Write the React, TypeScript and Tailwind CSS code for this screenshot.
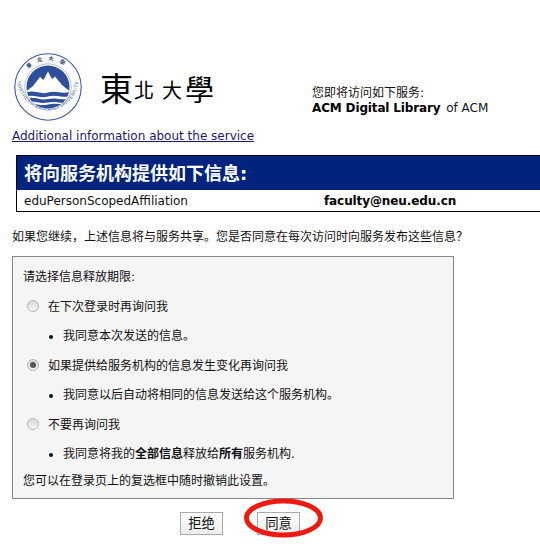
const Seal = () => (
  <svg width="68" height="68" viewBox="0 0 68 68" className="shrink-0 overflow-visible">
    <defs>
      <path id="seal-top" d="M 7.5 34 A 26.5 26.5 0 0 1 60.5 34" />
      <path id="seal-bottom" d="M 3.8 30 A 30.4 30.4 0 0 0 64.2 30" />
      <clipPath id="seal-disc">
        <circle cx="34" cy="34" r="21.5" />
      </clipPath>
    </defs>
    <circle cx="34" cy="34" r="33.2" fill="none" stroke="#3d5a9e" strokeWidth="1.1" />
    <circle cx="34" cy="34" r="23.2" fill="none" stroke="#7f93c2" strokeWidth="0.6" />
    <text fontSize="5.5" fill="#2b3f78" fontFamily="'Noto Sans CJK TC', serif" fontWeight="700">
      <textPath href="#seal-top" startOffset="50%" textAnchor="middle" letterSpacing="5.5">東北大學</textPath>
    </text>
    <text fontSize="4.7" fill="#3d5a9e" fontFamily="'Liberation Sans', sans-serif" letterSpacing="0.4">
      <textPath href="#seal-bottom" startOffset="50%" textAnchor="middle">NORTHEASTERN 1923 UNIVERSITY</textPath>
    </text>
    <g clipPath="url(#seal-disc)">
      <rect x="10" y="10" width="48" height="48" fill="#2f4f9b" />
      <path d="M10 40 L19 33 L26 24 L29.5 27 L34 18.5 L38 26 L41 23.5 L48 32 L58 40 V60 H10 Z" fill="#fff" />
      <path d="M10 40 C20 36 26 42 34 39.5 C42 37 48 42 58 38.5 V43 C48 45.5 42 41 34 43.5 C26 46 20 40.5 10 44 Z" fill="#2f4f9b" />
      <path d="M10 46 C20 42.5 26 48 34 46 C42 44 48 48 58 45 V48.5 C48 51.5 42 47.5 34 49.5 C26 51.5 20 46.5 10 49.5 Z" fill="#2f4f9b" />
      <path d="M10 52 C20 49 26 53.5 34 51.5 C42 49.5 48 53 58 50.5 V60 H10 Z" fill="#2f4f9b" />
    </g>
  </svg>
);

const Radio = ({ checked }: { checked?: boolean }) => (
  <span className="flex h-3 w-3 shrink-0 items-center justify-center rounded-full border border-[#b4b4b4] bg-gradient-to-b from-[#d8d8d8] to-[#f6f6f6]">
    {checked && <span className="h-1.5 w-1.5 rounded-full bg-[#555]" />}
  </span>
);

const options = [
  { label: '在下次登录时再询问我', detail: <>我同意本次发送的信息。</> },
  { label: '如果提供给服务机构的信息发生变化再询问我', checked: true, detail: <>我同意以后自动将相同的信息发送给这个服务机构。</> },
  {
    label: '不要再询问我',
    detail: (
      <>
        我同意将我的<strong>全部信息</strong>释放给<strong>所有</strong>服务机构.
      </>
    ),
  },
];

export default function App() {
  return (
    <div className="relative h-[557px] w-[540px] overflow-hidden bg-white pt-[53px] font-['DejaVu_Sans','Noto_Sans_CJK_SC',sans-serif] text-xs text-[#111]">
      {/* logo + service */}
      <div className="flex items-start pl-[14px]">
        <Seal />
        <div className="ml-[18px] flex h-[68px] w-[113px] items-center whitespace-nowrap font-['Noto_Sans_CJK_TC',serif] font-normal leading-none text-black">
          <span className="text-[33px]">東</span>
          <span className="ml-px mt-[6px] text-[20px]">北</span>
          <span className="ml-[8px] mt-[6px] text-[20px]">大</span>
          <span className="ml-[3px] mt-[3px] text-[29px]">學</span>
        </div>
        <div className="ml-[99px] mt-[33px] leading-[15px]">
          <div>您即将访问如下服务:</div>
          <div>
            <strong className="mr-[2px] tracking-[-0.15px] text-black">ACM Digital Library</strong> of ACM
          </div>
        </div>
      </div>

      <div className="mt-[7px] pl-3 leading-[16px]">
        <a className="text-[#1a1a6e] underline">Additional information about the service</a>
      </div>

      {/* attributes */}
      <div className="ml-4 mt-[11px] w-[560px] border-y border-l border-black">
        <div className="flex h-[34px] items-center bg-[#00247d] pl-[7px] pt-[2px] text-[18px] font-bold text-white">将向服务机构提供如下信息:</div>
        <div className="flex h-[21px] items-center pl-[7px]">
          <span className="w-[300px]">eduPersonScopedAffiliation</span>
          <strong className="tracking-[-0.1px] text-black">faculty@neu.edu.cn</strong>
        </div>
      </div>

      <p className="mt-[16px] pl-3 leading-[18px]">如果您继续，上述信息将与服务共享。您是否同意在每次访问时向服务发布这些信息？</p>

      {/* duration */}
      <div className="ml-3 mt-[10px] h-[243px] w-[442px] border border-[#888] bg-[#f5f5f5] pl-[10px] pt-[11px]">
        <div className="leading-[18px]">请选择信息释放期限:</div>
        {options.map((o) => (
          <div key={o.label}>
            <div className="mt-[12px] flex h-[18px] items-center">
              <span className="ml-[4px] mr-[8px] -translate-y-px">
                <Radio checked={o.checked} />
              </span>
              <span className="ml-px">{o.label}</span>
            </div>
            <ul className="ml-[40px] mt-[11px] list-disc">
              <li className="h-[18px] leading-[18px]">{o.detail}</li>
            </ul>
          </div>
        ))}
        <div className="mt-[9px] leading-[18px]">您可以在登录页上的复选框中随时撤销此设置。</div>
      </div>

      {/* actions */}
      <div className="mt-[13px] flex gap-[34px] pl-[180px]">
        <button className="h-[23px] w-[43px] border border-[#aaa] bg-gradient-to-b from-white to-[#ececec] text-[13.33px] leading-none">拒绝</button>
        <button className="h-[23px] w-[43px] border border-[#aaa] bg-gradient-to-b from-white to-[#ececec] text-[13.33px] leading-none">同意</button>
      </div>

      {/* red annotation */}
      <svg className="absolute left-[243px] top-[498px]" width="81" height="40" viewBox="0 0 81 40">
        <ellipse cx="40.5" cy="20" rx="37" ry="17" fill="none" stroke="#ee1a12" strokeWidth="5" />
      </svg>
    </div>
  );
}
